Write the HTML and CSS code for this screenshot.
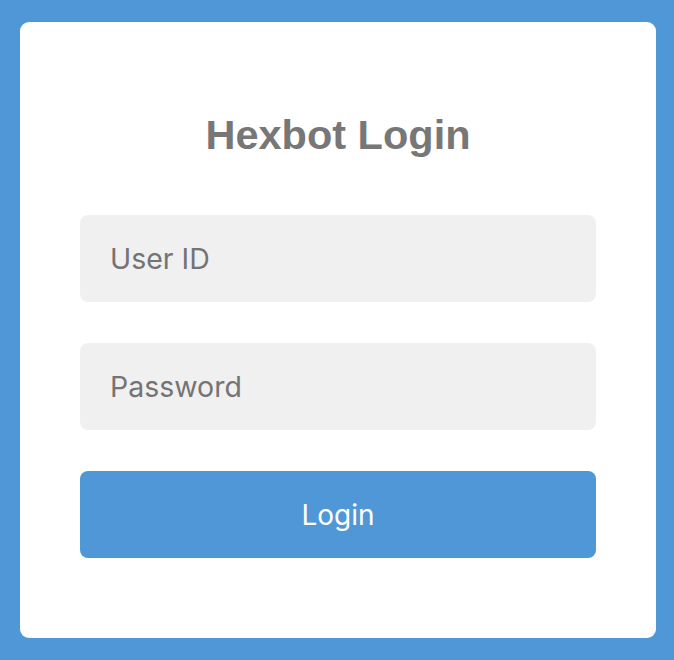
FILE: index.html
```html
<!DOCTYPE html>
<html lang="en">
<head>
<meta charset="utf-8">
<title>Hexbot Login</title>
<link rel="stylesheet" href="styles.css">
</head>
<body>
<main class="card">
  <h1 class="title">Hexbot Login</h1>
  <form class="form">
    <input class="field" type="text" placeholder="User ID">
    <input class="field" type="password" placeholder="Password">
    <button class="btn" type="button">Login</button>
  </form>
</main>
</body>
</html>
```
FILE: styles.css
```css
html, body {
  margin: 0;
  height: 100%;
}
body {
  background: #4f97d6;
  padding: 22px 18px 22px 20px;
  box-sizing: border-box;
  font-family: Inter, "Noto Sans", "Liberation Sans", sans-serif;
}
.card {
  background: #ffffff;
  border-radius: 9px;
  height: 616px;
  box-sizing: border-box;
  padding: 88px 60px 80px;
}
.title {
  margin: 0 0 55px;
  font-family: "Liberation Sans", Arial, sans-serif;
  font-weight: 700;
  font-size: 41.5px;
  line-height: 50px;
  color: #777777;
  text-align: center;
}
.form {
  display: flex;
  flex-direction: column;
  gap: 41px;
}
.field {
  display: block;
  width: 100%;
  height: 87px;
  box-sizing: border-box;
  border: none;
  outline: none;
  border-radius: 8px;
  background: #f0f0f0;
  padding: 0 30px;
  font-family: Inter, "Noto Sans", sans-serif;
  font-size: 28.5px;
  color: #555;
}
.field::placeholder {
  color: #747474;
  opacity: 1;
}
.btn {
  display: block;
  width: 100%;
  height: 87px;
  border: none;
  border-radius: 8px;
  background: #4f97d6;
  color: #ffffff;
  font-family: Inter, "Noto Sans", sans-serif;
  font-size: 28px;
  cursor: pointer;
}
```
